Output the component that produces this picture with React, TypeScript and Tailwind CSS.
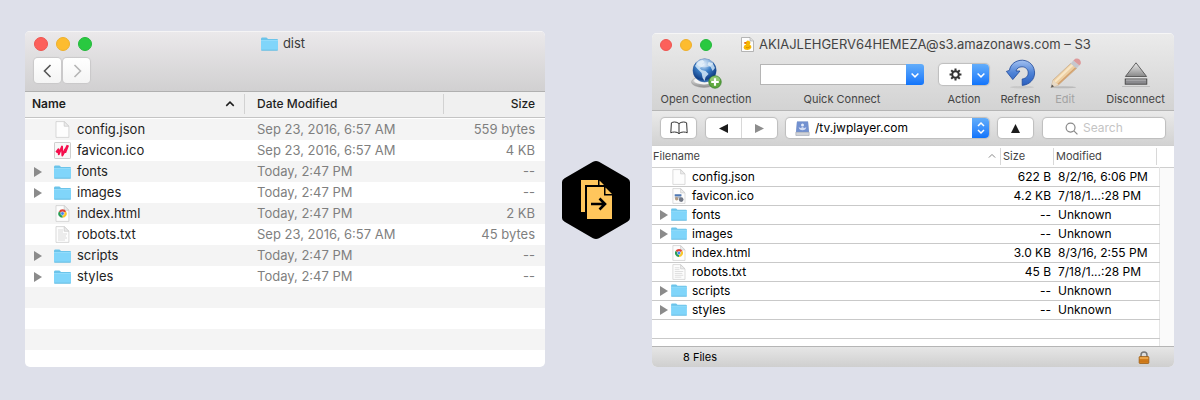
import React from "react";

type Kind = "blank" | "jw" | "ico" | "folder" | "html" | "text";
type Row = { name: string; kind: Kind; date: string; size: string };

const localFiles: Row[] = [
  { name: "config.json", kind: "blank", date: "Sep 23, 2016, 6:57 AM", size: "559 bytes" },
  { name: "favicon.ico", kind: "jw", date: "Sep 23, 2016, 6:57 AM", size: "4 KB" },
  { name: "fonts", kind: "folder", date: "Today, 2:47 PM", size: "--" },
  { name: "images", kind: "folder", date: "Today, 2:47 PM", size: "--" },
  { name: "index.html", kind: "html", date: "Today, 2:47 PM", size: "2 KB" },
  { name: "robots.txt", kind: "text", date: "Sep 23, 2016, 6:57 AM", size: "45 bytes" },
  { name: "scripts", kind: "folder", date: "Today, 2:47 PM", size: "--" },
  { name: "styles", kind: "folder", date: "Today, 2:47 PM", size: "--" },
];

const remoteFiles: Row[] = [
  { name: "config.json", kind: "blank", date: "8/2/16, 6:06 PM", size: "622 B" },
  { name: "favicon.ico", kind: "ico", date: "7/18/1...:28 PM", size: "4.2 KB" },
  { name: "fonts", kind: "folder", date: "Unknown", size: "--" },
  { name: "images", kind: "folder", date: "Unknown", size: "--" },
  { name: "index.html", kind: "html", date: "8/3/16, 2:55 PM", size: "3.0 KB" },
  { name: "robots.txt", kind: "text", date: "7/18/1...:28 PM", size: "45 B" },
  { name: "scripts", kind: "folder", date: "Unknown", size: "--" },
  { name: "styles", kind: "folder", date: "Unknown", size: "--" },
];

function FolderIcon({ className }: { className: string }) {
  return (
    <svg viewBox="0 0 17 14" className={className} aria-hidden="true">
      <path d="M0 2Q0 .5 1 .5H5Q6 .5 6.5 1.5L7 2H16Q17 2 17 3V5H0Z" fill="#6cc4ea" />
      <path d="M0 3.5H17V12.6Q17 13.5 16 13.5H1Q0 13.5 0 12.6Z" fill="#80d5fa" />
      <path d="M0 3.5H17" stroke="#9be0fc" strokeWidth="0.8" />
      <path d="M.3 13.2H16.7" stroke="#62b6dc" strokeWidth="0.8" />
    </svg>
  );
}

function PageShape() {
  return (
    <>
      <path d="M2 .6H10.2L14.9 5.2V16.4H2Z" fill="#fdfdfd" stroke="#c9c9c9" strokeWidth="0.7" />
      <path d="M10.2 .6V5.2H14.9Z" fill="#ececec" stroke="#c9c9c9" strokeWidth="0.7" />
    </>
  );
}

function FileIcon({ kind, className }: { kind: Kind; className: string }) {
  if (kind === "folder") return <FolderIcon className={className} />;
  return (
    <svg viewBox="0 0 17 17" className={className} aria-hidden="true">
      {kind === "jw" ? (
        <>
          <rect x=".5" y=".5" width="16" height="16" rx=".6" fill="#f8f8f8" stroke="#cfcfcf" />
          <path
            d="M2.2 10.4L4.4 7.4L4.8 12.2L8 4.6L8.4 13.4L13.6 3.2"
            fill="none"
            stroke="#f5104e"
            strokeWidth="2"
            strokeLinejoin="round"
          />
          <path d="M9 12.6L11 7L11.4 10.8L14.2 3.4" fill="none" stroke="#f5104e" strokeWidth="1.6" />
        </>
      ) : (
        <PageShape />
      )}
      {kind === "html" && (
        <>
          <path d="M8.5 8.5L4.8 6.4A4.2 4.2 0 0 1 12.2 6.4Z" fill="#dd4437" />
          <path d="M8.5 8.5L12.2 6.4A4.2 4.2 0 0 1 8.5 12.7Z" fill="#f9c72a" />
          <path d="M8.5 8.5L8.5 12.7A4.2 4.2 0 0 1 4.8 6.4Z" fill="#2a9c55" />
          <circle cx="8.5" cy="8.5" r="1.8" fill="#4285f4" stroke="#fff" strokeWidth="0.5" />
        </>
      )}
      {kind === "text" && (
        <path
          d="M4 4H9M4 6H9M4 8H13M4 10H12M4 12H13M4 14H11"
          stroke="#c6c6c6"
          strokeWidth="0.6"
        />
      )}
      {kind === "ico" && (
        <>
          <path d="M4 6.5H11V11H4Z" fill="#a9b7cc" />
          <path d="M4 7.8H11" stroke="#4c79b8" strokeWidth="1.6" />
          <circle cx="6" cy="11.4" r="1.8" fill="#b29b81" />
          <circle cx="10.8" cy="12.3" r="2.5" fill="#727885" />
        </>
      )}
    </svg>
  );
}

function Disclosure({ name }: { name: string }) {
  return (
    <button type="button" aria-label={`Expand ${name}`} className="flex h-4 w-2 shrink-0 items-center">
      <svg viewBox="0 0 8 10" className="h-[10px] w-2" aria-hidden="true">
        <path d="M0 0L8 5L0 10Z" fill="#8b8b8b" />
      </svg>
    </button>
  );
}

function Lights({ dot, gap }: { dot: string; gap: string }) {
  return (
    <div className={`flex ${gap}`}>
      <button type="button" aria-label="Close" className={`${dot} rounded-full border border-[#ee5550] bg-[#fc605b]`} />
      <button type="button" aria-label="Minimize" className={`${dot} rounded-full border border-[#eeb02c] bg-[#fdbc2f]`} />
      <button type="button" aria-label="Zoom" className={`${dot} rounded-full border border-[#24b83b] bg-[#29c940]`} />
    </div>
  );
}

function Chevron({ d, className }: { d: string; className: string }) {
  return (
    <svg viewBox="0 0 16 16" className={className} fill="none" stroke="currentColor" aria-hidden="true">
      <path d={d} />
    </svg>
  );
}

const navButton =
  "flex h-[25px] shrink-0 items-center justify-center rounded-[4px] bg-linear-to-b from-white to-[#f4f4f4] shadow-[0_0_1px_1px_#c9c8c9]";

function LocalWindow() {
  return (
    <section aria-label="dist" className="overflow-hidden rounded-[5px] bg-white text-[13px] text-[#1e1e1e]">
      <header className="border-b border-[#b0b0b0] bg-linear-to-b from-[#ebe9eb] to-[#d1d0d1]">
        <div className="grid h-[60px] grid-cols-[1fr_auto_1fr] grid-rows-[24px_27px] border-t border-[#f5f4f5] pr-3 pl-2">
          <div className="flex items-center pl-px">
            <Lights dot="size-[14px]" gap="gap-2" />
          </div>
          <h1 className="flex items-center gap-[5px] text-[13px] text-[#3a3a3a]">
            <FolderIcon className="h-[14px] w-[17px]" />
            dist
          </h1>
          <div />
          <div className="flex items-end gap-[2px] pl-px">
            <button type="button" aria-label="Back" className={`w-[27px] text-[#555] ${navButton}`}>
              <Chevron d="M10.5 2L4.5 8L10.5 14" className="size-4 stroke-[1.6]" />
            </button>
            <button type="button" aria-label="Forward" className={`w-[27px] text-[#b5b5b5] ${navButton}`}>
              <Chevron d="M5.5 2L11.5 8L5.5 14" className="size-4 stroke-[1.6]" />
            </button>
          </div>
        </div>
      </header>
      <table className="w-full table-fixed border-collapse">
        <thead className="border-b border-[#c4c4c4] bg-[#f0f0f0] text-[12px] leading-[24px]">
          <tr className="h-[25px]">
            <th scope="col" className="w-[220px] p-0 text-left font-semibold">
              <div className="flex h-5 items-center justify-between border-r border-[#d2d2d2] pl-[7px] pr-2">
                Name
                <Chevron d="M3 10.5L8 5.5L13 10.5" className="size-3 stroke-[2]" />
              </div>
            </th>
            <th scope="col" className="p-0 text-left font-medium">
              <div className="flex h-5 items-center border-r border-[#d2d2d2] pl-3">Date Modified</div>
            </th>
            <th scope="col" className="w-[101px] py-0 pr-[10px] pl-0 text-right font-medium">
              Size
            </th>
          </tr>
        </thead>
        <tbody>
          <tr className="h-[2px]">
            <td colSpan={3} className="p-0" />
          </tr>
          {localFiles.map((f) => (
            <tr key={f.name} className="h-[21px] leading-[21px] even:bg-[#f4f4f4]">
              <td className="p-0">
                <div className="flex h-[21px] items-center pl-[9px]">
                  <span className="mr-3 flex w-2">{f.kind === "folder" && <Disclosure name={f.name} />}</span>
                  <FileIcon kind={f.kind} className={f.kind === "folder" ? "h-[14px] w-[17px]" : "size-[17px]"} />
                  <span className="pl-[6px]">{f.name}</span>
                </div>
              </td>
              <td className="py-0 pr-0 pl-3 text-[#7f7f7f]">{f.date}</td>
              <td className="py-0 pr-[10px] pl-0 text-right text-[#7f7f7f]">{f.size}</td>
            </tr>
          ))}
          {[0, 1, 2].map((n) => (
            <tr key={n} className="h-[21px] even:bg-[#f4f4f4]">
              <td colSpan={3} className="p-0" />
            </tr>
          ))}
          <tr className="h-[17px]">
            <td colSpan={3} className="p-0" />
          </tr>
        </tbody>
      </table>
    </section>
  );
}

function DeployBadge() {
  return (
    <svg viewBox="0 0 68 78" className="h-[78px] w-[68px]" role="img" aria-label="Copy files">
      <path
        d="M31 .8Q34 -.6 37 .8L65.4 17.2Q68 18.6 68 21V57Q68 59.4 65.4 60.8L37 77.2Q34 78.6 31 77.2L2.6 60.8Q0 59.4 0 57V21Q0 18.6 2.6 17.2Z"
        fill="#000"
      />
      <path d="M19 19H36V24H23V51H19Z" fill="#ffc65c" />
      <path d="M37.5 19.5L42 24H37.5Z" fill="#ffc65c" />
      <path d="M25 26H42V34.5H50V58H25Z" fill="#ffc65c" />
      <path d="M43.5 26.5L50 33H43.5Z" fill="#ffc65c" />
      <path d="M29 43H42M37.5 37.5L43 43L37.5 48.5" fill="none" stroke="#000" strokeWidth="2.6" />
    </svg>
  );
}

function DuckDoc() {
  return (
    <svg viewBox="0 0 13 15" className="h-[15px] w-[13px]" aria-hidden="true">
      <path d="M.5 .5H9L12.5 4V14.5H.5Z" fill="#fdfdfd" stroke="#a5a5a5" strokeWidth="0.8" />
      <path d="M9 .5V4H12.5" fill="#ddd" stroke="#a5a5a5" strokeWidth="0.6" />
      <path
        d="M3.4 5.4L5 5A2.2 2.2 0 1 1 8.6 7.4Q10.8 8.3 10.4 10.6Q9.6 12.9 6.6 12.9Q3 12.9 2.6 10.4Q2.6 8.2 5.2 7.6Q4.6 6.6 3.4 6.4Z"
        fill="#f6b700"
      />
      <path d="M3 5.4L5.3 5V6.5L3.2 6.4Z" fill="#e2551d" />
      <path d="M5 10.4Q7 11.6 9 9.6" stroke="#d28a00" strokeWidth="0.8" fill="none" />
    </svg>
  );
}

function GlobeIcon() {
  return (
    <svg viewBox="0 0 32 32" className="size-8" aria-hidden="true">
      <defs>
        <radialGradient id="globe" cx="0.45" cy="0.25" r="0.8">
          <stop offset="0" stopColor="#d5e8fa" />
          <stop offset="0.4" stopColor="#3c80c8" />
          <stop offset="0.8" stopColor="#123f86" />
          <stop offset="1" stopColor="#5aa2e2" />
        </radialGradient>
        <linearGradient id="stand" x1="0" y1="0" x2="0" y2="1">
          <stop offset="0" stopColor="#fafafa" />
          <stop offset="1" stopColor="#8e8e8e" />
        </linearGradient>
      </defs>
      <ellipse cx="14" cy="25" rx="12.5" ry="5.4" fill="url(#stand)" stroke="#999" strokeWidth="0.5" />
      <ellipse cx="14" cy="23.8" rx="10" ry="3.6" fill="#f4f4f4" />
      <circle cx="14.6" cy="13.4" r="11.6" fill="url(#globe)" stroke="#174b92" strokeWidth="0.5" />
      <path
        d="M5 9Q8 3 12.6 3L14.6 5L11.6 7L13.6 9L9.6 11L11.6 13L15.6 14L18.6 17L15.6 20L14.6 24L12.6 21L11.6 16L7.6 12Z"
        fill="#d5e8f7"
        opacity="0.85"
      />
      <path d="M18.6 5L22.6 6L25 11L22.6 14L20.6 10L17.6 8Z" fill="#d5e8f7" opacity="0.8" />
      <ellipse cx="14.6" cy="6" rx="8.5" ry="4.2" fill="#fff" opacity="0.4" />
      <circle cx="25" cy="25" r="6.2" fill="#5fa83f" stroke="#35802a" strokeWidth="0.8" />
      <path d="M19.6 23.6A5.5 5.5 0 0 1 30.4 23.6Q25 25.8 19.6 23.6Z" fill="#a6d58a" opacity="0.7" />
      <path d="M25 21.2V28.8M21.2 25H28.8" stroke="#fff" strokeWidth="2.2" />
    </svg>
  );
}

function RefreshIcon() {
  return (
    <svg viewBox="0 0 32 32" className="size-8" aria-hidden="true">
      <defs>
        <linearGradient id="refresh" x1="0" y1="0" x2="0" y2="1">
          <stop offset="0" stopColor="#a3c1f1" />
          <stop offset="0.5" stopColor="#4f83d6" />
          <stop offset="1" stopColor="#2a5fc0" />
        </linearGradient>
      </defs>
      <ellipse cx="17" cy="30.2" rx="12" ry="1.2" fill="#bdbdbd" opacity="0.6" />
      <path
        d="M4.4 13.4C5.5 6.9 11 3.2 17.4 3.2C24.8 3.6 29.6 9 29.6 16C29.6 22.4 24.6 27.8 17.2 28.4V22C21 21.4 23.2 19.2 23.2 15.9C23.2 12.4 20.6 9.8 17 9.8C14 9.8 11.6 11.4 11 14H15L7.8 22.6L1.4 14.4Z"
        fill="url(#refresh)"
        stroke="#20499a"
        strokeWidth="0.8"
        strokeLinejoin="round"
      />
    </svg>
  );
}

function PencilIcon() {
  return (
    <svg viewBox="0 0 32 32" className="size-8" aria-hidden="true">
      <ellipse cx="14" cy="30.2" rx="13" ry="1" fill="#999" opacity="0.5" />
      <path d="M22 6.2L28 11L9.4 28L2.4 30.2L4 23Z" fill="#edcfa2" stroke="#bfa181" strokeWidth="0.6" />
      <path d="M23.8 7.6L6 24.8" stroke="#f8e6c6" strokeWidth="2.2" />
      <path d="M27 10.4L9 27.2" stroke="#d2a06e" strokeWidth="1.4" />
      <path d="M4 23L9.4 28L2.4 30.2Z" fill="#e8dac6" />
      <path d="M2.9 27.6L5 29.4L2 30.6Z" fill="#555" />
      <path d="M21.6 6.6L24.4 3.6L30.4 8.4L27.6 11.4Z" fill="#c5c7ce" />
      <path d="M24.4 3.6L26.2 1.8Q28.6 .6 30.8 2.8Q32.4 5 31.6 7L30.4 8.4Z" fill="#dd9a9b" />
    </svg>
  );
}

function EjectIcon() {
  return (
    <svg viewBox="0 0 28 32" className="h-8 w-7" aria-hidden="true">
      <defs>
        <linearGradient id="eject" x1="0" y1="0" x2="0" y2="1">
          <stop offset="0" stopColor="#ededed" />
          <stop offset="1" stopColor="#888" />
        </linearGradient>
      </defs>
      <path d="M0 29.5H28" stroke="#bdbdbd" strokeWidth="1" />
      <path d="M14 5.8L24.6 19.5H3.4Z" fill="url(#eject)" stroke="#555" strokeWidth="0.9" />
      <rect x="3.2" y="22" width="21.6" height="5.2" fill="#8b8b8f" stroke="#444" strokeWidth="0.9" />
      <path d="M4 23H24" stroke="#c8c8c8" strokeWidth="0.8" />
    </svg>
  );
}

function GearIcon() {
  return (
    <svg viewBox="0 0 14 14" className="size-[13px]" aria-hidden="true">
      <circle cx="7" cy="7" r="3.6" fill="none" stroke="#333" strokeWidth="2.2" />
      <path
        d="M7 .6V3M7 11V13.4M.6 7H3M11 7H13.4M2.4 2.4L4.2 4.2M9.8 9.8L11.6 11.6M11.6 2.4L9.8 4.2M4.2 9.8L2.4 11.6"
        stroke="#333"
        strokeWidth="2.2"
      />
    </svg>
  );
}

function BookIcon() {
  return (
    <svg viewBox="0 0 18 14" className="h-[14px] w-[18px]" fill="none" stroke="#333" aria-hidden="true">
      <path d="M9 2.6Q7 1 4.6 1Q2.8 1 1.4 1.8L.8 11.8Q2.4 11 4.6 11Q7.4 11 9 12.6Q10.6 11 13.4 11Q15.6 11 17.2 11.8L16.6 1.8Q15.2 1 13.4 1Q11 1 9 2.6ZM9 2.6V12.6" />
    </svg>
  );
}

function DriveIcon() {
  return (
    <svg viewBox="0 0 15 16" className="h-[15px] w-[15px]" aria-hidden="true">
      <path d="M1.6 .5H13.4L14.6 12V15.4H.4V12Z" fill="#bfc6d1" />
      <path d="M1.6 .5H13.4L14.4 11.6H.6Z" fill="#7291d0" />
      <path d="M.4 12H14.6V15.4H.4Z" fill="#d2d4d8" stroke="#999fac" strokeWidth="0.5" />
      <circle cx="7.5" cy="4.2" r="1.6" fill="#e3ebfa" />
      <path d="M3.4 6.6Q4 9.8 7.5 9.8Q11 9.8 11.6 6.6L9.4 7.4L7.5 6.4L5.6 7.4Z" fill="#d2dcf3" />
    </svg>
  );
}

function LockIcon() {
  return (
    <svg viewBox="0 0 12 14" className="h-[13px] w-3" role="img" aria-label="Secure">
      <path d="M2.8 7V4.4A3.2 3.2 0 0 1 9.2 4.4V7" fill="none" stroke="#777" strokeWidth="1.6" />
      <rect x=".8" y="6" width="10.4" height="7.4" rx=".8" fill="#dc8722" stroke="#93530c" strokeWidth="0.8" />
      <path d="M1.4 7.6H10.6" stroke="#f7c173" strokeWidth="1.2" />
      <path d="M1.4 9.8H10.6M1.4 11.6H10.6" stroke="#b9650f" strokeWidth="0.7" />
    </svg>
  );
}

function Tool({ label, icon, className, disabled }: { label: string; icon: React.ReactNode; className: string; disabled?: boolean }) {
  return (
    <button type="button" disabled={disabled} className={`flex shrink-0 flex-col items-center whitespace-nowrap disabled:text-[#a3a3a3] ${className}`}>
      {icon}
      <span className="mt-[2px] leading-4">{label}</span>
    </button>
  );
}

const blueCap = "flex items-center justify-center bg-linear-to-b from-[#62adfa] to-[#0f74fb] text-white";
const pill = "flex h-5 shrink-0 items-center justify-center rounded-[4px] bg-white shadow-[0_0_1px_1px_#bdbdbd]";

function RemoteWindow() {
  return (
    <section aria-label="S3 bucket" className="overflow-hidden rounded-[5px] bg-white text-[12px] text-black">
      <header className="border-b border-[#b5b5b5] bg-linear-to-b from-[#ebebeb] to-[#d3d3d3] text-[#444]">
        <div className="flex h-[22px] items-center border-t border-[#f6f6f6] pl-2">
          <Lights dot="size-3" gap="gap-2" />
          <h2 className="ml-[29px] flex items-center gap-[5px] whitespace-nowrap text-[13px]">
            <DuckDoc />
            AKIAJLEHGERV64HEMEZA@s3.amazonaws.com – S3
          </h2>
        </div>
        <div className="flex h-[55px] items-start pl-2 pr-[9px] pt-[2px] text-[11px]">
          <Tool label="Open Connection" className="w-[92px]" icon={<GlobeIcon />} />
          <div className="ml-2 flex min-w-0 flex-1 flex-col">
            <div className="mt-[7px] flex h-[21px]">
              <input id="quick" type="text" className="min-w-0 flex-1 border border-r-0 border-[#b5b5b5] bg-white px-1 text-black" />
              <button type="button" aria-label="Show bookmarks" className={`w-[18px] rounded-r-[3px] ${blueCap}`}>
                <Chevron d="M3.5 6L8 10.5L12.5 6" className="size-3 stroke-[2]" />
              </button>
            </div>
            <label htmlFor="quick" className="mt-[6px] text-center leading-4">
              Quick Connect
            </label>
          </div>
          <Tool
            label="Action"
            className="ml-[15px] w-[50px]"
            icon={
              <span className="mt-[7px] mb-1 flex h-[21px] w-full overflow-hidden rounded-[4px] bg-white shadow-[0_0_1px_1px_#bdbdbd]">
                <span className="flex flex-1 items-center justify-center">
                  <GearIcon />
                </span>
                <span className={`w-[17px] ${blueCap}`}>
                  <Chevron d="M3.5 6L8 10.5L12.5 6" className="size-3 stroke-[2]" />
                </span>
              </span>
            }
          />
          <Tool label="Refresh" className="ml-[11px] w-[41px]" icon={<RefreshIcon />} />
          <Tool label="Edit" disabled className="ml-[7px] w-[34px]" icon={<PencilIcon />} />
          <Tool label="Disconnect" className="ml-[24px] w-[59px]" icon={<EjectIcon />} />
        </div>
      </header>
      <div className="flex h-[35px] items-center border-b border-[#cfcfcf] bg-linear-to-b from-[#eaeaea] to-[#d2d2d2] pl-[9px] pr-[9px]">
        <button type="button" aria-label="Bookmarks" className={`w-[35px] ${pill}`}>
          <BookIcon />
        </button>
        <div className={`ml-[10px] w-[71px] ${pill}`}>
          <button type="button" aria-label="Back" className="flex h-full flex-1 items-center justify-center border-r border-[#d8d8d8]">
            <svg viewBox="0 0 9 9" className="size-[9px]" aria-hidden="true">
              <path d="M9 0V9L0 4.5Z" fill="#1c1c1c" />
            </svg>
          </button>
          <button type="button" aria-label="Forward" className="flex h-full flex-1 items-center justify-center">
            <svg viewBox="0 0 9 9" className="size-[9px]" aria-hidden="true">
              <path d="M0 0V9L9 4.5Z" fill="#8d8d8d" />
            </svg>
          </button>
        </div>
        <label className="ml-[9px] flex h-5 min-w-0 flex-1 items-center overflow-hidden rounded-[4px] bg-white pl-[9px] shadow-[0_0_1px_1px_#bdbdbd]">
          <DriveIcon />
          <select aria-label="Path" className="min-w-0 flex-1 appearance-none pl-[5px] text-[12px] leading-5">
            <option>/tv.jwplayer.com</option>
          </select>
          <span className={`h-full w-[17px] ${blueCap}`}>
            <svg viewBox="0 0 10 16" className="h-4 w-[10px]" fill="none" stroke="currentColor" strokeWidth="1.5" aria-hidden="true">
              <path d="M2 6L5 3L8 6M2 10L5 13L8 10" />
            </svg>
          </span>
        </label>
        <button type="button" aria-label="Up" className={`ml-[9px] w-[35px] ${pill}`}>
          <svg viewBox="0 0 9 9" className="size-[9px]" aria-hidden="true">
            <path d="M4.5 0L9 9H0Z" fill="#1c1c1c" />
          </svg>
        </button>
        <label className={`ml-[10px] w-[122px] gap-[5px] pl-[22px] ${pill}`}>
          <svg viewBox="0 0 14 14" className="size-[13px] shrink-0" fill="none" stroke="#8a8a8a" strokeWidth="1.3" aria-hidden="true">
            <circle cx="6" cy="6" r="4.8" />
            <path d="M9.6 9.6L13.4 13.4" />
          </svg>
          <input type="search" aria-label="Search" placeholder="Search" className="min-w-0 flex-1 text-[12px] placeholder:text-[#c4c4c4]" />
        </label>
      </div>
      <table className="w-full table-fixed border-collapse">
        <thead className="border-b border-[#cfcfcf] text-[11px] text-[#444]">
          <tr className="h-[21px]">
            <th scope="col" className="p-0 text-left font-normal">
              <div className="flex h-[17px] items-center justify-between border-r border-[#d8d8d8] pl-px pr-[3px]">
                Filename
                <Chevron d="M3 10.5L8 5.5L13 10.5" className="size-[10px] stroke-[1.6] text-[#888]" />
              </div>
            </th>
            <th scope="col" className="w-[53px] p-0 text-left font-normal">
              <div className="flex h-[17px] items-center border-r border-[#d8d8d8] pl-[2px]">Size</div>
            </th>
            <th scope="col" className="w-[105px] p-0 text-left font-normal">
              <div className="mr-[2px] flex h-[17px] items-center border-r border-[#d8d8d8] pl-[2px]">Modified</div>
            </th>
            <th scope="col" aria-label="More columns" className="w-[15px] p-0" />
          </tr>
        </thead>
        <tbody>
          {remoteFiles.map((f) => (
            <tr key={f.name} className="h-[19px] leading-[18px]">
              <td className="border-b border-[#c9c9c9] p-0">
                <div className="flex h-[18px] items-center pl-2">
                  <span className="mr-[3px] flex w-2">{f.kind === "folder" && <Disclosure name={f.name} />}</span>
                  <FileIcon kind={f.kind} className={f.kind === "folder" ? "h-[13px] w-4" : "size-4"} />
                  <span className="pl-[5px]">{f.name}</span>
                </div>
              </td>
              <td className="border-b border-[#c9c9c9] py-0 pr-[3px] pl-0 text-right whitespace-nowrap">{f.size}</td>
              <td className="border-b border-[#c9c9c9] py-0 pr-0 pl-1 whitespace-nowrap">{f.date}</td>
              <td className="border-l border-[#e5e5e5] bg-[#fafafa] p-0" />
            </tr>
          ))}
          <tr className="h-[19px]">
            <td colSpan={3} className="border-b border-[#c9c9c9] p-0" />
            <td className="border-l border-[#e5e5e5] bg-[#fafafa] p-0" />
          </tr>
          <tr className="h-2">
            <td colSpan={3} className="p-0" />
            <td className="border-l border-[#e5e5e5] bg-[#fafafa] p-0" />
          </tr>
        </tbody>
      </table>
      <footer className="flex h-[21px] items-center justify-between border-t border-[#b5b5b5] bg-linear-to-b from-[#e6e6e6] to-[#cfcfcf] pl-[31px] pr-6 text-[11px]">
        8 Files
        <LockIcon />
      </footer>
    </section>
  );
}

export default function App() {
  return (
    <main className="grid min-h-screen grid-cols-[520fr_107px_522fr] items-end bg-[#dee0ea] pt-[31px] pr-[26px] pb-[33px] pl-[25px] font-['Inter','Liberation_Sans',sans-serif]">
      <LocalWindow />
      <div className="flex justify-center self-center pt-[2px] pr-[5px]">
        <DeployBadge />
      </div>
      <RemoteWindow />
    </main>
  );
}
